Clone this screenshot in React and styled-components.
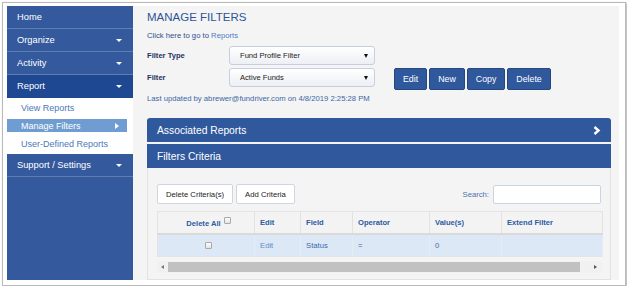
import React from "react";
import styled, { createGlobalStyle } from "styled-components";

const Global = createGlobalStyle`
  html, body { margin: 0; padding: 0; background: #fff; }
  body { font-family: "Liberation Sans", Arial, sans-serif; }
  * { box-sizing: border-box; }
`;

const Frame = styled.div`
  margin: 2px 0 0 2px;
  width: 624px;
  height: 284px;
  border: 1px solid #b9b9b9;
  box-shadow: 1px 1px 2px rgba(0,0,0,0.35);
  padding: 3px 6px 5px 4px;
  display: flex;
`;

const Sidebar = styled.nav`
  width: 126px;
  flex: none;
  background: #34599d;
  display: flex;
  flex-direction: column;
`;

const NavItem = styled.div`
  height: 23px;
  padding: 0 10px;
  display: flex;
  align-items: center;
  justify-content: space-between;
  color: #fff;
  font-size: 9.3px;
  background: ${p => (p.$active ? "#1f4892" : "transparent")};
  border-bottom: 1px solid ${p => (p.$active ? "#1f4892" : "rgba(255,255,255,0.22)")};
`;

const Caret = styled.span`
  width: 0;
  height: 0;
  border-left: 3px solid transparent;
  border-right: 3px solid transparent;
  border-top: 3px solid #fff;
  margin-right: 1px;
`;

const SubMenu = styled.div`
  background: #fff;
  padding: 3px 6px 4px 0;
  display: flex;
  flex-direction: column;
  gap: 5px;
`;

const SubItem = styled.div`
  height: 13px;
  padding-left: 14px;
  padding-right: 8px;
  display: flex;
  align-items: center;
  justify-content: space-between;
  font-size: 9px;
  color: ${p => (p.$active ? "#fff" : "#4b79b9")};
  background: ${p => (p.$active ? "#6f9dd1" : "transparent")};
`;

const RightTri = styled.span`
  width: 0;
  height: 0;
  border-top: 3.5px solid transparent;
  border-bottom: 3.5px solid transparent;
  border-left: 4px solid #fff;
`;

const Main = styled.main`
  flex: 1;
  background: #f4f4f4;
  padding: 4px 8px 0 14px;
  display: flex;
  flex-direction: column;
  min-width: 0;
`;

const Title = styled.h1`
  margin: 0;
  font-size: 11.5px;
  line-height: 14px;
  font-weight: normal;
  color: #2e5597;
`;

const GoLink = styled.div`
  margin-top: 7px;
  font-size: 7.7px;
  line-height: 10px;
  color: #2c4f8c;
  a { color: #4a7cc0; text-decoration: none; }
`;

const FormRow = styled.div`
  display: flex;
  align-items: flex-start;
  margin-top: ${p => p.$mt || "0px"};
`;

const Label = styled.label`
  width: 82px;
  height: 19px;
  display: flex;
  align-items: center;
  font-size: 7.6px;
  font-weight: bold;
  color: #1d3461;
`;

const Select = styled.div`
  width: 146px;
  height: 19px;
  border: 1px solid #c6cfe0;
  border-radius: 3px;
  background: linear-gradient(#ffffff, #eceff4);
  display: flex;
  align-items: center;
  justify-content: space-between;
  padding: 0 6px 0 10px;
  font-size: 7.6px;
  color: #222;
`;

const DownTri = styled.span`
  width: 0;
  height: 0;
  border-left: 2.5px solid transparent;
  border-right: 2.5px solid transparent;
  border-top: 4px solid #111;
`;

const BtnGroup = styled.div`
  display: flex;
  gap: 2px;
  margin-left: 19px;
`;

const BlueBtn = styled.button`
  height: 22px;
  margin: 0;
  padding: 0 8px;
  border: 1px solid #24477f;
  border-radius: 2px;
  background: #30599d;
  color: #fff;
  font-family: inherit;
  font-size: 8.8px;
`;

const Updated = styled.div`
  margin-top: 4px;
  font-size: 7.7px;
  line-height: 10px;
  color: #3b67a7;
`;

const PanelHead = styled.div`
  margin-top: ${p => p.$mt || "0px"};
  height: 24px;
  background: #30599d;
  border-radius: ${p => (p.$first ? "3px 3px 0 0" : "0")};
  color: #fff;
  font-size: 10.3px;
  padding: 0 10px;
  display: flex;
  align-items: center;
  justify-content: space-between;
`;

const PanelBody = styled.div`
  flex: 1;
  border: 1px solid #e2e2e2;
  border-top: none;
  background: #f4f4f4;
  padding: 16px 9px 0 9px;
  display: flex;
  flex-direction: column;
`;

const Toolbar = styled.div`
  display: flex;
  align-items: center;
  justify-content: space-between;
`;

const LightBtn = styled.button`
  height: 20px;
  margin: 0;
  padding: 0 8px;
  border: 1px solid #cfd6e2;
  border-radius: 2px;
  background: #fff;
  color: #222;
  font-family: inherit;
  font-size: 7.7px;
`;

const Tools = styled.div`
  display: flex;
  gap: 3px;
`;

const Search = styled.label`
  display: flex;
  align-items: center;
  gap: 4px;
  font-size: 7.7px;
  color: #4a72b0;
`;

const SearchInput = styled.div`
  width: 108px;
  height: 19px;
  background: #fff;
  border: 1px solid #c9d4e6;
  border-radius: 2px;
`;

const Table = styled.table`
  margin-top: 7px;
  width: 445px;
  border-collapse: collapse;
  table-layout: fixed;
  border: 1px solid #e4e4e4;
`;

const Th = styled.th`
  height: 22px;
  background: #f3f3f3;
  border-right: 1px solid #e2e2e2;
  border-bottom: 2px solid #dadada;
  padding: 0 0 0 5px;
  text-align: ${p => (p.$center ? "center" : "left")};
  font-size: 7.6px;
  font-weight: bold;
  color: #2d5ba1;
`;

const Td = styled.td`
  height: 23px;
  background: #dde8f6;
  border-right: 1px solid #e6ecf5;
  padding: 0 0 0 5px;
  text-align: ${p => (p.$center ? "center" : "left")};
  font-size: 7.7px;
  color: ${p => (p.$link ? "#5f8bc8" : "#3a69ad")};
`;

const Check = styled.span`
  display: inline-block;
  width: 7px;
  height: 7px;
  border: 1px solid #a9a9a9;
  border-radius: 1px;
  background: linear-gradient(#fdfdfd, #e3e3e3);
  vertical-align: ${p => (p.$raise ? "2px" : "middle")};
  margin-left: ${p => (p.$raise ? "3px" : "0")};
`;

const Scroll = styled.div`
  margin-top: 4px;
  width: 445px;
  height: 12px;
  background: #f1f1f1;
  display: flex;
  align-items: center;
`;

const ScrollArrow = styled.span`
  width: ${p => p.$w};
  display: flex;
  justify-content: center;
  flex: none;
`;

const ArrowL = styled.span`
  width: 0;
  height: 0;
  border-top: 2.5px solid transparent;
  border-bottom: 2.5px solid transparent;
  border-right: 3px solid #777;
`;

const ArrowR = styled.span`
  width: 0;
  height: 0;
  border-top: 2.5px solid transparent;
  border-bottom: 2.5px solid transparent;
  border-left: 3px solid #555;
`;

const Thumb = styled.div`
  flex: 1;
  height: 10px;
  background: #c1c1c1;
  margin-right: 8px;
`;

const Chevron = () => (
  <svg width="8" height="9" viewBox="0 0 8 9">
    <path d="M1.5 1 L5.5 4.5 L1.5 8" fill="none" stroke="#fff" strokeWidth="2.4" />
  </svg>
);

export default function App() {
  return (
    <>
      <Global />
      <Frame>
        <Sidebar>
          <NavItem>Home</NavItem>
          <NavItem>Organize<Caret /></NavItem>
          <NavItem>Activity<Caret /></NavItem>
          <NavItem $active>Report<Caret /></NavItem>
          <SubMenu>
            <SubItem>View Reports</SubItem>
            <SubItem $active>Manage Filters<RightTri /></SubItem>
            <SubItem>User-Defined Reports</SubItem>
          </SubMenu>
          <NavItem>Support / Settings<Caret /></NavItem>
        </Sidebar>
        <Main>
          <Title>MANAGE FILTERS</Title>
          <GoLink>Click here to go to <a href="#">Reports</a></GoLink>
          <FormRow $mt="5px">
            <Label>Filter Type</Label>
            <Select>Fund Profile Filter<DownTri /></Select>
          </FormRow>
          <FormRow $mt="3px">
            <Label>Filter</Label>
            <Select>Active Funds<DownTri /></Select>
            <BtnGroup>
              <BlueBtn>Edit</BlueBtn>
              <BlueBtn>New</BlueBtn>
              <BlueBtn>Copy</BlueBtn>
              <BlueBtn>Delete</BlueBtn>
            </BtnGroup>
          </FormRow>
          <Updated>Last updated by abrewer@fundriver.com on 4/8/2019 2:25:28 PM</Updated>
          <PanelHead $first $mt="14px">Associated Reports<Chevron /></PanelHead>
          <PanelHead $mt="2px">Filters Criteria</PanelHead>
          <PanelBody>
            <Toolbar>
              <Tools>
                <LightBtn>Delete Criteria(s)</LightBtn>
                <LightBtn>Add Criteria</LightBtn>
              </Tools>
              <Search>Search: <SearchInput /></Search>
            </Toolbar>
            <Table>
              <colgroup>
                <col style={{ width: 97 }} />
                <col style={{ width: 46 }} />
                <col style={{ width: 52 }} />
                <col style={{ width: 77 }} />
                <col style={{ width: 72 }} />
                <col style={{ width: 101 }} />
              </colgroup>
              <thead>
                <tr>
                  <Th $center>Delete All<Check $raise /></Th>
                  <Th>Edit</Th>
                  <Th>Field</Th>
                  <Th>Operator</Th>
                  <Th>Value(s)</Th>
                  <Th>Extend Filter</Th>
                </tr>
              </thead>
              <tbody>
                <tr>
                  <Td $center><Check /></Td>
                  <Td $link>Edit</Td>
                  <Td>Status</Td>
                  <Td>=</Td>
                  <Td>0</Td>
                  <Td></Td>
                </tr>
              </tbody>
            </Table>
            <Scroll>
              <ScrollArrow $w="11px"><ArrowL /></ScrollArrow>
              <Thumb />
              <ScrollArrow $w="14px"><ArrowR /></ScrollArrow>
            </Scroll>
          </PanelBody>
        </Main>
      </Frame>
    </>
  );
}
